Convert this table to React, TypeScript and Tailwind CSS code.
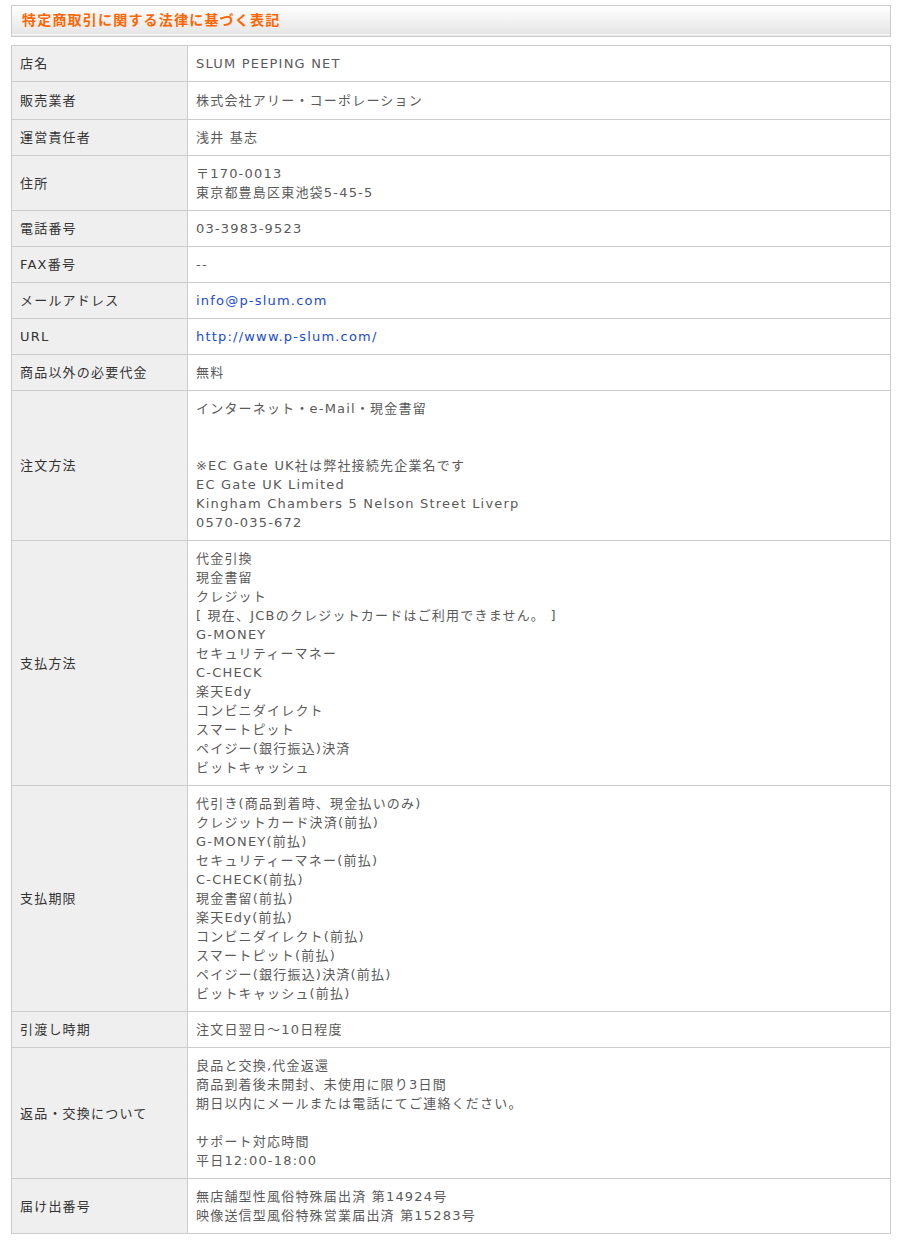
const rows: { label: string; lines: string[]; link?: boolean; tall?: boolean }[] = [
  { label: "店名", lines: ["SLUM PEEPING NET"] },
  { label: "販売業者", lines: ["株式会社アリー・コーポレーション"], tall: true },
  { label: "運営責任者", lines: ["浅井 基志"] },
  { label: "住所", lines: ["〒170-0013", "東京都豊島区東池袋5-45-5"] },
  { label: "電話番号", lines: ["03-3983-9523"] },
  { label: "FAX番号", lines: ["--"] },
  { label: "メールアドレス", lines: ["info@p-slum.com"], link: true },
  { label: "URL", lines: ["http://www.p-slum.com/"], link: true },
  { label: "商品以外の必要代金", lines: ["無料"] },
  {
    label: "注文方法",
    lines: [
      "インターネット・e-Mail・現金書留",
      "",
      "",
      "※EC Gate UK社は弊社接続先企業名です",
      "EC Gate UK Limited",
      "Kingham Chambers 5 Nelson Street Liverp",
      "0570-035-672",
    ],
  },
  {
    label: "支払方法",
    lines: [
      "代金引換",
      "現金書留",
      "クレジット",
      "[ 現在、JCBのクレジットカードはご利用できません。 ]",
      "G-MONEY",
      "セキュリティーマネー",
      "C-CHECK",
      "楽天Edy",
      "コンビニダイレクト",
      "スマートピット",
      "ペイジー(銀行振込)決済",
      "ビットキャッシュ",
    ],
  },
  {
    label: "支払期限",
    lines: [
      "代引き(商品到着時、現金払いのみ)",
      "クレジットカード決済(前払)",
      "G-MONEY(前払)",
      "セキュリティーマネー(前払)",
      "C-CHECK(前払)",
      "現金書留(前払)",
      "楽天Edy(前払)",
      "コンビニダイレクト(前払)",
      "スマートピット(前払)",
      "ペイジー(銀行振込)決済(前払)",
      "ビットキャッシュ(前払)",
    ],
  },
  { label: "引渡し時期", lines: ["注文日翌日～10日程度"] },
  {
    label: "返品・交換について",
    lines: [
      "良品と交換,代金返還",
      "商品到着後未開封、未使用に限り3日間",
      "期日以内にメールまたは電話にてご連絡ください。",
      "",
      "サポート対応時間",
      "平日12:00-18:00",
    ],
  },
  {
    label: "届け出番号",
    lines: ["無店舗型性風俗特殊届出済 第14924号", "映像送信型風俗特殊営業届出済 第15283号"],
  },
];

export default function App() {
  return (
    <div className="min-h-screen bg-white font-['DejaVu_Sans','Noto_Sans_CJK_JP',sans-serif]">
      <div className="ml-[11px] w-[880px] pt-[5px]">
        <div className="flex h-[32px] flex-col border border-[#cccccc] bg-gradient-to-b from-white to-[#e4e4e4]">
          <h1 className="flex flex-1 items-center pl-[10px] text-[14px] font-bold tracking-[1.2px] text-[#ff6600]">
            特定商取引に関する法律に基づく表記
          </h1>
          <div className="h-[2px] border-t border-[#f8f8f8] bg-[#e8e8e8]" />
        </div>

        <table className="mt-[8px] w-full table-fixed border-collapse text-[13px] leading-[19px] tracking-[1.2px]">
          <colgroup>
            <col className="w-[176px]" />
            <col />
          </colgroup>
          <tbody>
            {rows.map((row) => (
              <tr key={row.label}>
                <th
                  className={`border border-[#cccccc] bg-[#efefef] px-[8px] text-left align-middle font-normal text-[#333333] ${
                    row.tall ? "py-[9px]" : "py-[8px]"
                  }`}
                >
                  {row.label}
                </th>
                <td
                  className={`border border-[#cccccc] px-[8px] align-top ${
                    row.tall ? "py-[9px]" : "py-[8px]"
                  } ${row.link ? "text-[#1a4bd1]" : "text-[#5a5a5a]"}`}
                >
                  {row.lines.map((line, i) => (
                    <div key={i} className="whitespace-pre">
                      {line === "" ? "\u00a0" : line}
                    </div>
                  ))}
                </td>
              </tr>
            ))}
          </tbody>
        </table>
      </div>
    </div>
  );
}
